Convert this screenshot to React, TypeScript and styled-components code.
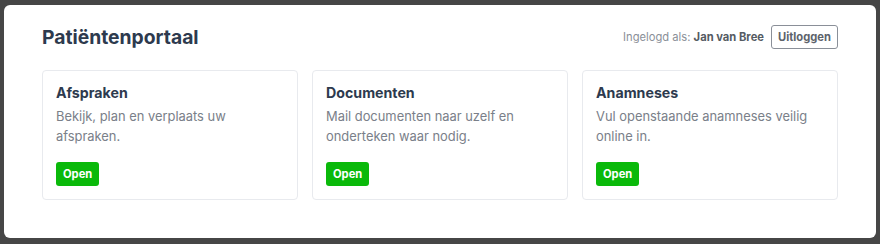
import React from "react";
import styled, { createGlobalStyle } from "styled-components";

const Global = createGlobalStyle`
  html, body { margin: 0; padding: 0; background: #464646; }
  body { font-family: Inter, "Noto Sans", "Liberation Sans", sans-serif; }
  * { box-sizing: border-box; }
`;

const Page = styled.div`
  padding: 5px 4px 6px 4px;
  height: 244px;
`;

const Panel = styled.div`
  background: #ffffff;
  border-radius: 6px;
  height: 233px;
  padding: 20px 38px 38px 38px;
  display: flex;
  flex-direction: column;
  gap: 21px;
`;

const Header = styled.div`
  display: flex;
  align-items: center;
  justify-content: space-between;
  height: 24px;
`;

const Title = styled.h1`
  margin: 0;
  font-size: 19.3px;
  font-weight: 700;
  color: #2d3a4e;
`;

const UserArea = styled.div`
  display: flex;
  align-items: center;
  gap: 7px;
`;

const UserText = styled.span`
  font-size: 11.2px;
  color: #8a8f98;
  b { color: #555b63; font-weight: 700; }
`;

const OutlineButton = styled.button`
  height: 24px;
  padding: 0 6px;
  border: 1px solid #8a8f98;
  border-radius: 3px;
  background: #fff;
  color: #5d636b;
  font-family: inherit;
  font-size: 11.2px;
  font-weight: 700;
  cursor: pointer;
`;

const Grid = styled.div`
  display: grid;
  grid-template-columns: repeat(3, 1fr);
  gap: 14px;
`;

const Card = styled.div`
  border: 1px solid #e8eaee;
  border-radius: 4px;
  padding: 13px;
  height: 130px;
  display: flex;
  flex-direction: column;
  align-items: flex-start;
`;

const CardTitle = styled.h2`
  margin: 0 0 5px 0;
  font-size: 14.2px;
  line-height: 18px;
  font-weight: 700;
  color: #2d3a4e;
`;

const CardText = styled.p`
  margin: 0 0 15px 0;
  font-size: 12.9px;
  line-height: 20px;
  color: #7a8089;
`;

const GreenButton = styled.button`
  height: 24px;
  padding: 0 7px;
  border: none;
  border-radius: 3px;
  background: #0ab90a;
  color: #fff;
  font-family: inherit;
  font-size: 11.2px;
  font-weight: 700;
  cursor: pointer;
`;

const items = [
  { title: "Afspraken", text: "Bekijk, plan en verplaats uw afspraken." },
  { title: "Documenten", text: "Mail documenten naar uzelf en onderteken waar nodig." },
  { title: "Anamneses", text: "Vul openstaande anamneses veilig online in." },
];

export default function App() {
  return (
    <>
      <Global />
      <Page>
        <Panel>
          <Header>
            <Title>Patiëntenportaal</Title>
            <UserArea>
              <UserText>
                Ingelogd als: <b>Jan van Bree</b>
              </UserText>
              <OutlineButton>Uitloggen</OutlineButton>
            </UserArea>
          </Header>
          <Grid>
            {items.map((it) => (
              <Card key={it.title}>
                <CardTitle>{it.title}</CardTitle>
                <CardText>{it.text}</CardText>
                <GreenButton>Open</GreenButton>
              </Card>
            ))}
          </Grid>
        </Panel>
      </Page>
    </>
  );
}
